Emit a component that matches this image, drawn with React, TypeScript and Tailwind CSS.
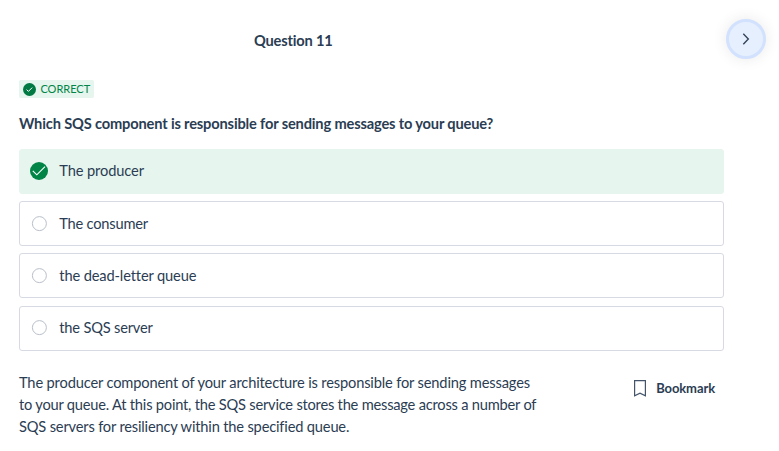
import React from "react";

function Option({ label, tracking, correct }: { label: string; tracking: string; correct?: boolean }) {
  return (
    <div
      className={
        "flex h-[45px] items-center rounded-[3px] border pl-[10px] " +
        (correct ? "border-[#e6f5ee] bg-[#e6f5ee] pb-[2px]" : "border-[#d7dae2] bg-white")
      }
    >
      {correct ? (
        <svg width="18" height="18" viewBox="0 0 18 18" className="shrink-0">
          <circle cx="9" cy="9" r="9" fill="#008547" />
          <path d="M2.8 8.8l4 4 8.2-8.1" fill="none" stroke="#fff" strokeWidth="1.15" />
        </svg>
      ) : (
        <svg width="18" height="18" viewBox="0 0 18 18" className="shrink-0">
          <circle cx="9.4" cy="8.6" r="7" fill="#fff" stroke="#b9bfca" />
        </svg>
      )}
      <span className={"ml-[11.3px] text-[14.67px] leading-[22px] " + tracking}>{label}</span>
    </div>
  );
}

export default function App() {
  return (
    <div className="h-[451px] w-[779px] overflow-hidden bg-white pr-[13px] pl-[19px] font-['Lato',sans-serif] text-[#2b3d53]">
      <header className="flex h-[80px] items-start justify-between pt-[19px]">
        <h1 className="ml-[235px] text-[14.67px] leading-[44px] font-bold tracking-[-0.2px]">Question 11</h1>
        <button className="flex size-10 items-center justify-center rounded-full border-[3px] border-[#d2e1fd] bg-[#e6effe] shadow-[0_0_15px_rgba(0,0,0,0.09)]">
          <svg width="10" height="12" viewBox="0 0 10 12" fill="none" stroke="#35455a" strokeWidth="1.4">
            <path d="M2.3 .8l5 5.2-5 5.2" />
          </svg>
        </button>
      </header>
      <main className="w-[705px]">
        <div className="flex h-[18px] w-[75px] items-center gap-1 rounded-[2px] bg-[#e6f5ee] pl-1 text-[11px] text-[#008547]">
          <svg width="13" height="13" viewBox="0 0 13 13">
            <circle cx="6.5" cy="6.5" r="6.5" fill="#007a42" />
            <path d="M3.6 6.6l1.8 1.8 3.8-3.8" fill="none" stroke="#fff" strokeWidth="1" />
          </svg>
          <span className="pl-[0.4px]">CORRECT</span>
        </div>
        <h2 className="mt-[15px] text-[14.67px] leading-[22px] font-bold tracking-[-0.17px]">
          Which SQS component is responsible for sending messages to your queue?
        </h2>
        <div className="mt-[14px] flex flex-col gap-[7.2px]">
          <Option label="The producer" tracking="tracking-[-0.12px]" correct />
          <Option label="The consumer" tracking="tracking-[-0.22px]" />
          <Option label="the dead-letter queue" tracking="tracking-[-0.14px]" />
          <Option label="the SQS server" tracking="tracking-[-0.2px]" />
        </div>
        <div className="mt-[21.4px] flex items-start justify-between">
          <p className="text-[14.67px] leading-[22px] whitespace-nowrap">
            <span className="tracking-[-0.16px]">
              The producer component of your architecture is responsible for sending messages
            </span>
            <br />
            <span className="tracking-[-0.218px]">
              to your queue. At this point, the SQS service stores the message across a number of
            </span>
            <br />
            <span className="tracking-[-0.18px]">SQS servers for resiliency within the specified queue.</span>
          </p>
          <button className="mt-[6px] mr-[9px] flex items-center gap-[10px] text-[13px] leading-5 font-bold tracking-[-0.1px]">
            <svg width="12" height="17" viewBox="0 0 12 17" fill="none" stroke="#44546a" strokeWidth="1.2" className="mt-px">
              <path d="M.6.6h10.8v15.2L6 13.2.6 15.8z" />
            </svg>
            Bookmark
          </button>
        </div>
      </main>
    </div>
  );
}
